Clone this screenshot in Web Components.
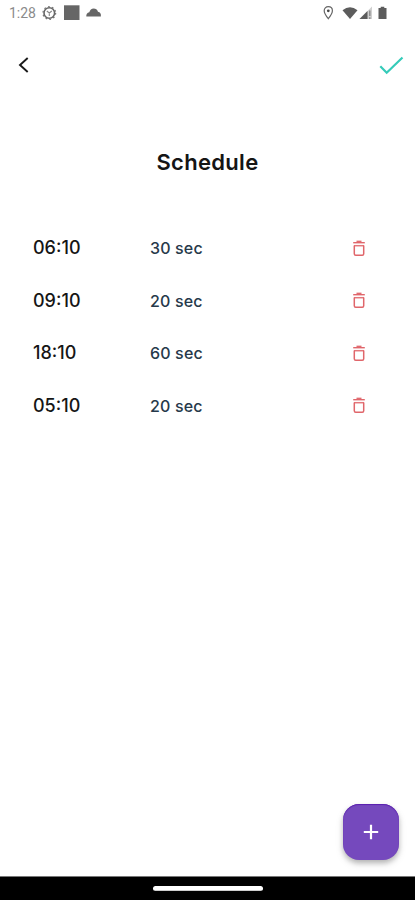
<!DOCTYPE html>
<html lang="en">
<head>
<meta charset="utf-8">
<title>Schedule</title>
<style>
html,body{margin:0;height:100%;background:#fff}
body{font-family:Inter,"Open Sans",sans-serif;overflow:hidden}
</style>
</head>
<body>
<schedule-screen></schedule-screen>
<script>
const define=(name,html)=>customElements.define(name,class extends HTMLElement{
  constructor(){
    super();
    const t=document.createElement('template');
    t.innerHTML=html;
    this.attachShadow({mode:'open'}).append(t.content.cloneNode(true));
  }
});

define('status-bar',`
<style>
:host{display:flex;align-items:center;height:26px;box-sizing:border-box;padding:0 27px 0 9px;color:#8b8b8b;font:400 14px/26px Roboto,sans-serif}
svg{display:block;flex:none}
.time{width:33px;letter-spacing:-.05px}
.gap{flex:1}
</style>
<span class="time">1:28</span>
<svg width="15" height="16" viewBox="0 0 15 16" fill="none"><circle cx="7.3" cy="8" r="5.3" stroke="#666" stroke-width="1.6"/><circle cx="7.3" cy="8" r="6.3" stroke="#777" stroke-width="1.3" stroke-dasharray="1.7 2.25"/><path d="M4.8 6l2.5 2 2.5-2M7.3 8v3" stroke="#888" stroke-width="1.1"/></svg>
<svg style="margin-left:6px" width="17" height="16" viewBox="0 0 17 16"><path d="M1 .3h15.500v14.700H1z" fill="#666"/></svg>
<svg style="margin-left:6px" width="16" height="12" viewBox="0 0 16 12"><path d="M.3 9.500Q0 6 3.300 5.300Q4.300 1.700 7.700 1.500Q10.800 1.500 12 4.800Q15.300 5.200 14.900 9.500Z" fill="#666"/></svg>
<span class="gap"></span>
<svg width="11" height="16" viewBox="0 0 11 16"><path d="M5.300 1.700C2.800 1.700 1.200 3.400 1.200 5.700C1.200 8.500 5.300 13.700 5.300 13.700S9.400 8.500 9.400 5.700C9.400 3.400 7.800 1.700 5.300 1.700Z" fill="none" stroke="#666" stroke-width="1.200"/><circle cx="5.300" cy="5.800" r="1.400" fill="#444"/></svg>
<svg style="margin-left:8px" width="16" height="14" viewBox="0 0 16 14"><path d="M.5 4.200Q8-1.800 15.500 4.200L8 13Z" fill="#5c5c5c"/></svg>
<svg style="margin-left:1px" width="15" height="14" viewBox="0 0 15 14"><path d="M.5 13L13 .5V13Z" fill="#d0d0d0"/><path d="M.5 13L8.500 5V13Z" fill="#5c5c5c"/><path d="M10.800 4.500v5.500M10.800 11.200v1.800" stroke="#888" stroke-width="1.400"/></svg>
<svg style="margin:0 1px 0 4px" width="9" height="14" viewBox="0 0 9 14"><path d="M.5 2H2.700V.7H6.300V2H8.500V13H.5Z" fill="#5c5c5c"/></svg>
`);

define('nav-bar',`
<style>
:host{display:flex;justify-content:space-between;align-items:center;height:78px;padding:0 10px 0 16px}
svg{display:block}
</style>
<svg width="16" height="20" viewBox="0 0 16 20" fill="none" stroke="#191919" stroke-width="1.900"><path d="M11.700 3L4 10L11.700 17"/></svg>
<svg width="26" height="20" viewBox="0 0 26 20" fill="none" stroke="#35cbb9" stroke-width="2.200"><path d="M1.300 11.200L7.700 17.700L23.500 2.500"/></svg>
`);

define('schedule-row',`
<style>
:host{display:grid;grid-template-columns:117px 1fr 14px;align-items:center;height:52.500px;padding:0 49px 0 33px}
.time{font-size:18px;font-weight:500;color:#161616;letter-spacing:0}
.duration{font-size:16px;font-weight:450;color:#26394a;letter-spacing:.15px;padding-top:1px}
svg{display:block}
</style>
<span class="time"><slot name="time"></slot></span>
<span class="duration"><slot></slot></span>
<svg width="14" height="18" viewBox="0 0 14 18" fill="none" stroke="#e0666b"><path d="M1.200 3.700H12.800" stroke-width="1.400"/><path d="M4.500 2.300H9.500" stroke-width="1.300"/><path d="M2 6.700H12" stroke-width="1.500" stroke="#e4777b"/><path d="M2.300 6.500V14.700Q2.300 16.200 3.700 16.200H10.300Q11.700 16.200 11.700 14.700V6.500" stroke-width="1.500"/></svg>
`);

define('add-button',`
<style>
:host{display:grid;place-items:center;width:56px;height:56px;border-radius:16px;background:#7549bd;box-shadow:inset 0 1px 1px #5a1fae,0 3px 5px rgba(0,0,0,.22),0 4px 9px rgba(0,0,0,.1)}
svg{display:block}
</style>
<svg width="16" height="16" viewBox="0 0 16 16" stroke="#fff" stroke-width="2.200"><path d="M8 .8V15.200M.8 8H15.200"/></svg>
`);

define('gesture-bar',`
<style>
:host{display:grid;height:24px;box-sizing:border-box;border-top:1px solid #777;background:#000;justify-items:center;align-content:start;padding-top:9px}
i{width:110px;height:5px;border-radius:2.500px;background:linear-gradient(#fff 75%,#aaa)}
</style><i></i>
`);

define('schedule-screen',`
<style>
:host{display:flex;flex-direction:column;height:900px;width:415px}
h1{margin:41px 0 0;height:34px;font-size:22px;line-height:34px;font-weight:600;text-align:center;color:#151515;letter-spacing:.3px}
main{display:flex;flex-direction:column;margin-top:42.500px;flex:1}
footer{display:flex;justify-content:flex-end;padding:0 16px 16px 0}
</style>
<status-bar></status-bar>
<nav-bar></nav-bar>
<h1>Schedule</h1>
<main>
<schedule-row><span slot="time">06:10</span>30 sec</schedule-row>
<schedule-row><span slot="time">09:10</span>20 sec</schedule-row>
<schedule-row><span slot="time">18:10</span>60 sec</schedule-row>
<schedule-row><span slot="time">05:10</span>20 sec</schedule-row>
</main>
<footer><add-button></add-button></footer>
<gesture-bar></gesture-bar>
`);
</script>
</body>
</html>
